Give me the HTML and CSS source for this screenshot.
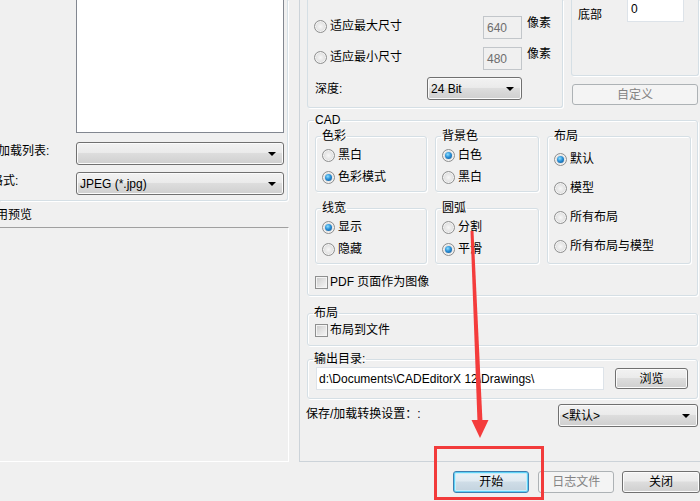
FILE: index.html
```html
<!DOCTYPE html>
<html>
<head>
<meta charset="utf-8">
<link rel="stylesheet" href="styles.css">
</head>
<body>
<div class="dialog">
  <div class="main">
    <div class="left">
      <div class="left-group">
        <div class="listbox"></div>
        <div class="lrow row-load">
          <div class="llabel lbl-load">加载列表:</div>
          <div class="combo lcombo"><span class="ctext"></span><i class="arrow"></i></div>
        </div>
        <div class="lrow row-fmt">
          <div class="llabel lbl-fmt">格式:</div>
          <div class="combo lcombo"><span class="ctext">JPEG (*.jpg)</span><i class="arrow"></i></div>
        </div>
      </div>
      <div class="preview-title"><span class="pt-text">启用预览</span></div>
      <div class="preview"></div>
    </div>

    <div class="right">
      <div class="top-row">
        <div class="size-group">
          <label class="opt span2 up"><i class="radio"></i><span>适应最大尺寸</span></label>
          <div class="numbox">640</div>
          <span class="unit">像素</span>
          <label class="opt span2 up"><i class="radio"></i><span>适应最小尺寸</span></label>
          <div class="numbox">480</div>
          <span class="unit">像素</span>
          <span class="depth-label">深度:</span>
          <div class="combo depth-combo"><span class="ctext">24 Bit</span><i class="arrow"></i></div>
        </div>
        <div class="margin-col">
          <div class="margin-group">
            <span class="mlabel">底部</span>
            <div class="textbox mbox">0</div>
          </div>
          <div class="btn disabled custom">自定义</div>
        </div>
      </div>

      <fieldset class="group cad">
        <legend>CAD</legend>
        <div class="cad-grid">
          <fieldset class="group sub">
            <legend>色彩</legend>
            <div class="opts">
              <label class="opt"><i class="radio"></i><span>黑白</span></label>
              <label class="opt"><i class="radio on"></i><span>色彩模式</span></label>
            </div>
          </fieldset>
          <fieldset class="group sub">
            <legend>背景色</legend>
            <div class="opts">
              <label class="opt"><i class="radio on"></i><span>白色</span></label>
              <label class="opt"><i class="radio"></i><span>黑白</span></label>
            </div>
          </fieldset>
          <fieldset class="group sub layout-sub">
            <legend>布局</legend>
            <div class="opts wide">
              <label class="opt"><i class="radio on"></i><span>默认</span></label>
              <label class="opt"><i class="radio"></i><span>模型</span></label>
              <label class="opt"><i class="radio"></i><span>所有布局</span></label>
              <label class="opt"><i class="radio"></i><span>所有布局与模型</span></label>
            </div>
          </fieldset>
          <fieldset class="group sub">
            <legend>线宽</legend>
            <div class="opts">
              <label class="opt"><i class="radio on"></i><span>显示</span></label>
              <label class="opt"><i class="radio"></i><span>隐藏</span></label>
            </div>
          </fieldset>
          <fieldset class="group sub">
            <legend>圆弧</legend>
            <div class="opts">
              <label class="opt"><i class="radio"></i><span>分割</span></label>
              <label class="opt"><i class="radio on"></i><span>平滑</span></label>
            </div>
          </fieldset>
        </div>
        <label class="opt check-row"><i class="check"></i><span>PDF 页面作为图像</span></label>
      </fieldset>

      <fieldset class="group layout-file">
        <legend>布局</legend>
        <label class="opt check-row"><i class="check"></i><span>布局到文件</span></label>
      </fieldset>

      <fieldset class="group outdir">
        <legend>输出目录:</legend>
        <div class="out-row">
          <div class="textbox path">d:\Documents\CADEditorX 12\Drawings\</div>
          <div class="btn browse">浏览</div>
        </div>
      </fieldset>

      <div class="save-row">
        <span class="save-label">保存/加载转换设置：:</span>
        <div class="combo save-combo"><span class="ctext">&lt;默认&gt;</span><i class="arrow"></i></div>
      </div>
    </div>
  </div>

  <div class="buttons">
    <div class="btn default start">开始</div>
    <div class="btn disabled log">日志文件</div>
    <div class="btn close">关闭</div>
  </div>

  <div class="redbox"></div>
  <svg class="arrow-svg" width="700" height="501" viewBox="0 0 700 501">
    <polygon points="470.5,231 473.5,231 482.5,422 477.5,422" fill="#f43c3c"/>
    <polygon points="471.5,420 488.5,420 480,438" fill="#f43c3c"/>
  </svg>
</div>
</body>
</html>
```

FILE: styles.css
```css
html, body {
  margin: 0;
  padding: 0;
}
body {
  width: 700px;
  height: 501px;
  overflow: hidden;
  background: #f0f0f0;
}
.dialog {
  position: relative;
  width: 700px;
  height: 501px;
  font-family: "Liberation Sans", "Noto Sans CJK SC", sans-serif;
  font-size: 12px;
  line-height: 14px;
  color: #000;
  display: flex;
  flex-direction: column;
}
.main {
  display: flex;
  height: 462px;
}

/* ---------- left column ---------- */
.left {
  width: 289px;
  display: flex;
  flex-direction: column;
  overflow: hidden;
}
.left-group {
  width: 288px;
  height: 201px;
  box-sizing: border-box;
  border-right: 1px solid #d5dfe5;
  border-bottom: 1px solid #d5dfe5;
  border-bottom-right-radius: 3px;
  box-shadow: 1px 1px 0 #fff;
}
.listbox {
  margin-left: 76px;
  width: 208px;
  height: 133px;
  box-sizing: border-box;
  background: #fff;
  border: 1px solid #828790;
  border-top: none;
}
.lrow {
  display: flex;
  align-items: center;
  height: 23px;
}
.row-load { margin-top: 9px; }
.row-fmt { margin-top: 7px; }
.llabel {
  white-space: nowrap;
  flex: none;
}
.lbl-load { width: 78px; margin-left: -2px; margin-top: -5px; }
.lbl-fmt { width: 85px; margin-left: -9px; margin-top: -5px; }
.lcombo { width: 208px; }

.preview-title {
  height: 26px;
  display: flex;
  align-items: center;
  padding-top: 2px;
  box-sizing: border-box;
  white-space: nowrap;
}
.pt-text { margin-left: -16px; }
.preview {
  width: 289px;
  height: 235px;
  box-sizing: border-box;
  border-top: 1px solid #a0a0a0;
  border-right: 1px solid #fff;
  border-bottom: 1px solid #fff;
}

/* ---------- right column ---------- */
.right {
  margin-left: 10px;
  flex: 1;
  height: 462px;
  box-sizing: border-box;
  border-left: 1px solid #ccd3d9;
  border-bottom: 1px solid #ccd3d9;
  display: flex;
  flex-direction: column;
}
.top-row {
  display: flex;
  height: 108px;
  flex: none;
}
.size-group {
  margin-left: 7px;
  width: 256px;
  height: 108px;
  box-sizing: border-box;
  border: 1px solid #d5dfe5;
  border-top: none;
  border-radius: 0 0 3px 3px;
  box-shadow: 1px 1px 0 #fff;
  padding: 16px 0 0 6px;
  display: grid;
  grid-template-columns: 113px 56px 39px 5px 24px;
  grid-template-rows: 23px 23px 21px;
  row-gap: 8px;
  align-items: center;
}
.span2 { grid-column: 1 / 3; }
.up { margin-top: -3px; }
.numbox {
  grid-column: 3;
  height: 23px;
  box-sizing: border-box;
  border: 1px solid #c2c6ca;
  background: #f0f0f0;
  color: #6d6d6d;
  padding-left: 3px;
  display: flex;
  align-items: center;
}
.unit {
  grid-column: 5;
  align-self: start;
  margin-top: 0px;
  white-space: nowrap;
}
.depth-label { grid-column: 1; margin-left: 1px; }
.depth-combo { grid-column: 2 / 4; height: 21px; }

.margin-col {
  margin-left: 8px;
  width: 128px;
  display: flex;
  flex-direction: column;
}
.margin-group {
  height: 76px;
  box-sizing: border-box;
  border: 1px solid #d5dfe5;
  border-top: none;
  border-radius: 0 0 3px 3px;
  box-shadow: 1px 1px 0 #fff;
  display: flex;
  align-items: flex-start;
  padding-left: 6px;
}
.mlabel {
  width: 49px;
  margin-top: 8px;
  flex: none;
}
.textbox {
  background: #fff;
  box-sizing: border-box;
  border: 1px solid #dde3e9;
  display: flex;
  align-items: center;
  padding-left: 3px;
  white-space: nowrap;
  overflow: hidden;
}
.mbox {
  width: 57px;
  height: 22px;
  border-top: none;
  align-items: flex-start;
  padding-top: 2px;
}
.custom {
  margin-top: 8px;
  margin-left: 1px;
  width: 126px;
  height: 21px;
}

/* group boxes */
fieldset.group {
  margin: 0;
  padding: 0;
  min-width: 0;
  border: 1px solid #d5dfe5;
  border-radius: 3px;
  box-shadow: 1px 1px 0 #fff, inset 1px 1px 0 #fff;
}
fieldset.group > legend {
  padding: 0 1px;
  margin-left: -1px;
  line-height: 14px;
  height: 14px;
  font-size: 12px;
}
.cad {
  margin: 5px 0 0 7px !important;
  width: 391px;
  box-sizing: border-box;
  padding: 0 0 5px 7px !important;
}
.cad-grid {
  margin-top: 2px;
  display: grid;
  grid-template-columns: 112px 104px 144px;
  grid-template-rows: 63px 63px;
  column-gap: 8px;
  row-gap: 9px;
}
fieldset.sub {
  box-sizing: border-box;
  padding: 0 0 0 6px;
}
fieldset.sub > legend { margin-left: -1px; }
.layout-sub {
  grid-column: 3;
  grid-row: 1 / 3;
}
.opts {
  padding-top: 4px;
  display: flex;
  flex-direction: column;
  gap: 6px;
}
.opts.wide {
  padding-top: 8px;
  gap: 13px;
}
.opt {
  display: flex;
  align-items: center;
  height: 16px;
  gap: 3px;
  white-space: nowrap;
}
.radio {
  width: 13px;
  height: 13px;
  box-sizing: border-box;
  border-radius: 50%;
  border: 1px solid #8e8f8f;
  background: radial-gradient(circle at 50% 50%, #f7f7f7 0, #e6e6e6 45%, #c9c9c9 100%);
  box-shadow: inset 0 0 0 1px #f4f4f4;
  flex: none;
  display: grid;
  place-items: center;
}
.radio.on::after {
  content: "";
  width: 7px;
  height: 7px;
  border-radius: 50%;
  background: radial-gradient(circle at 40% 35%, #8ee0ff 0, #2a8fd6 45%, #0c4f8c 100%);
}
.check {
  width: 13px;
  height: 13px;
  box-sizing: border-box;
  border: 1px solid #8e8f8f;
  background: linear-gradient(135deg, #c9c9c9 0, #e2e2e2 50%, #f7f7f7 100%);
  box-shadow: inset 0 0 0 1px #f4f4f4;
  flex: none;
}
.check-row {
  margin-top: 10px;
  gap: 2px;
}
.layout-file {
  margin: 10px 0 0 7px !important;
  width: 391px;
  box-sizing: border-box;
  padding: 0 0 7px 7px !important;
}
.layout-file > legend { margin-left: -2px !important; }
.layout-file .check-row { margin-top: 2px; }
.outdir {
  margin: 6px 0 0 7px !important;
  width: 391px;
  box-sizing: border-box;
  padding: 0 0 8px 8px !important;
}
.outdir > legend { margin-left: -3px !important; }
.out-row {
  margin-top: 1px;
  display: flex;
  align-items: flex-start;
}
.path {
  width: 288px;
  height: 23px;
  padding-left: 2px;
}
.browse {
  margin-top: 1px;
  margin-left: 11px;
  width: 73px;
  height: 21px;
}
.save-row {
  margin-top: 5px;
  display: flex;
  align-items: center;
  height: 23px;
}
.save-label { margin-left: 6px; white-space: nowrap; margin-top: -4px; }
.save-combo {
  margin-left: auto;
  margin-right: 2px;
  width: 140px;
}

/* combo boxes */
.combo {
  height: 23px;
  box-sizing: border-box;
  border: 1px solid #707070;
  border-radius: 3px;
  background: linear-gradient(#f2f2f2 0, #ebebeb 45%, #dddddd 50%, #cfcfcf 100%);
  box-shadow: inset 0 0 0 1px #fbfbfb;
  display: flex;
  align-items: center;
  white-space: nowrap;
}
.ctext {
  flex: 1;
  padding-left: 3px;
  overflow: hidden;
}
.arrow {
  width: 0;
  height: 0;
  border-left: 4px solid transparent;
  border-right: 4px solid transparent;
  border-top: 4px solid #000;
  margin-right: 7px;
  flex: none;
}

/* buttons */
.btn {
  box-sizing: border-box;
  border: 1px solid #707070;
  border-radius: 3px;
  background: linear-gradient(#f2f2f2 0, #ebebeb 45%, #dddddd 50%, #cfcfcf 100%);
  box-shadow: inset 0 0 0 1px #fbfbfb;
  display: flex;
  align-items: center;
  justify-content: center;
  white-space: nowrap;
}
.btn.disabled {
  border-color: #adb2b5;
  background: #f4f4f4;
  box-shadow: none;
  color: #838383;
}
.btn.default {
  border-color: #3c7fb1;
  background: linear-gradient(#eaf2f7 0, #e0eaf1 45%, #cfdde7 50%, #c2d2de 100%);
  box-shadow: inset 0 0 0 1px #5fd2f6, inset 0 0 0 2px #c6eefb;
}
.buttons {
  margin-top: 9px;
  display: flex;
  padding-left: 453px;
  height: 22px;
}
.start { width: 79px; }
.log { width: 78px; margin-left: 9px; }
.close { width: 78px; margin-left: 8px; flex: none; }

/* annotations overlay */
.redbox {
  position: absolute;
  left: 434px;
  top: 446px;
  width: 110px;
  height: 54px;
  box-sizing: border-box;
  border: 3px solid #f23b3b;
}
.arrow-svg {
  position: absolute;
  left: 0;
  top: 0;
  pointer-events: none;
}
```
